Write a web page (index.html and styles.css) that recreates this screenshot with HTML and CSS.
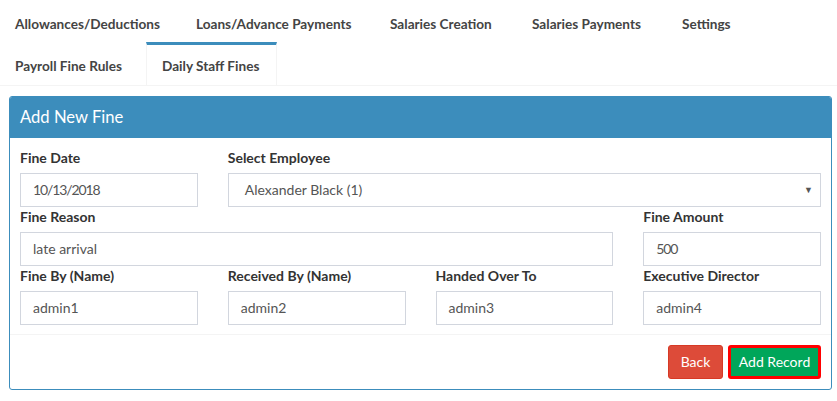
FILE: index.html
```html
<!DOCTYPE html>
<html>
<head>
<meta charset="utf-8">
<link rel="stylesheet" href="styles.css">
</head>
<body>
<div class="tabs">
  <ul class="tab-list">
    <li class="tab t1"><a>Allowances/Deductions</a></li>
    <li class="tab t2"><a>Loans/Advance Payments</a></li>
    <li class="tab t3"><a>Salaries Creation</a></li>
    <li class="tab t4"><a>Salaries Payments</a></li>
    <li class="tab t5"><a>Settings</a></li>
    <li class="tab t6"><a>Payroll Fine Rules</a></li>
    <li class="tab active"><a>Daily Staff Fines</a></li>
  </ul>
</div>
<div class="box">
  <div class="box-header">Add New Fine</div>
  <div class="box-body">
    <div class="row">
      <div class="col col-3">
        <label>Fine Date</label>
        <div class="input"><span class="num">10/13/2018</span></div>
      </div>
      <div class="col col-9">
        <label>Select Employee</label>
        <div class="input select">
          <span>Alexander Black (1)</span>
          <span class="caret">&#9660;</span>
        </div>
      </div>
    </div>
    <div class="row">
      <div class="col col-9">
        <label>Fine Reason</label>
        <div class="input">late arrival</div>
      </div>
      <div class="col col-3">
        <label>Fine Amount</label>
        <div class="input"><span class="num">500</span></div>
      </div>
    </div>
    <div class="row">
      <div class="col col-3">
        <label>Fine By (Name)</label>
        <div class="input">admin1</div>
      </div>
      <div class="col col-3">
        <label>Received By (Name)</label>
        <div class="input">admin2</div>
      </div>
      <div class="col col-3">
        <label>Handed Over To</label>
        <div class="input">admin3</div>
      </div>
      <div class="col col-3">
        <label>Executive Director</label>
        <div class="input">admin4</div>
      </div>
    </div>
  </div>
  <div class="box-footer">
    <button class="btn btn-back">Back</button>
    <button class="btn btn-add">Add Record</button>
  </div>
</div>
</body>
</html>
```

FILE: styles.css
```css
* { box-sizing: border-box; }
html, body { margin: 0; padding: 0; background: #fff; }
body {
  font-family: Lato, "Source Sans Pro", "Liberation Sans", sans-serif;
  font-size: 14px;
  color: #333;
  width: 837px;
}
.tabs {
  border-bottom: 1px solid #f4f4f4;
  margin-bottom: 10px;
}
.tab-list {
  list-style: none;
  margin: 0;
  padding: 0;
  display: flex;
  flex-wrap: wrap;
  width: 800px;
}
.tab {
  border-top: 3px solid transparent;
  margin-right: 5px;
  height: 42px;
}
.t1 { width: 176px; }
.t2 { width: 189px; }
.t3 { width: 137px; }
.t4 { width: 145px; }
.t6 { width: 141px; }
.tab a {
  display: block;
  padding: 11px 0 9px 15px;
  line-height: 20px;
  font-size: 13.6px;
  font-weight: 700;
  color: #444;
  white-space: nowrap;
}
.tab.active {
  border-top-color: #3c8dbc;
  border-left: 1px solid #f4f4f4;
  border-right: 1px solid #f4f4f4;
  width: 131px;
  height: 43px;
  background: #fff;
}
.box {
  margin: 0 5px 0 9px;
  border: 1px solid #3c8dbc;
  border-radius: 3px;
  overflow: hidden;
  width: 823px;
}
.box-header {
  background: #3c8dbc;
  color: #fff;
  font-size: 16.6px;
  line-height: 20px;
  padding: 10px 10px 11px;
  height: 41px;
}
.box-body {
  padding: 10px 10px 9px 10px;
}
.row {
  display: flex;
  margin: 0 -15px;
}
.col { padding: 0 15px; }
.col-3 { width: 25%; }
.col-9 { width: 75%; }
label {
  display: block;
  font-weight: 700;
  line-height: 20px;
  margin-bottom: 5px;
  color: #333;
}
.input {
  height: 34px;
  border: 1px solid #d2d6de;
  padding: 6px 12px;
  line-height: 20px;
  color: #555;
  font-size: 14px;
}
.num { letter-spacing: -1.1px; }
.select {
  display: flex;
  justify-content: space-between;
  padding-left: 16px;
  padding-right: 7px;
}
.caret { font-size: 9px; color: #555; }
.box-footer {
  border-top: 1px solid #f4f4f4;
  padding: 10px;
  display: flex;
  justify-content: flex-end;
  gap: 5px;
}
.btn {
  font-family: inherit;
  font-size: 14px;
  color: #fff;
  border-radius: 3px;
  height: 34px;
  line-height: 20px;
  padding: 0;
  white-space: nowrap;
  cursor: pointer;
}
.btn-back {
  background: #dd4b39;
  border: 1px solid #d73925;
  width: 55px;
}
.btn-add {
  background: #00a65a;
  border: 3px solid #ff0000;
  width: 93px;
}
```
